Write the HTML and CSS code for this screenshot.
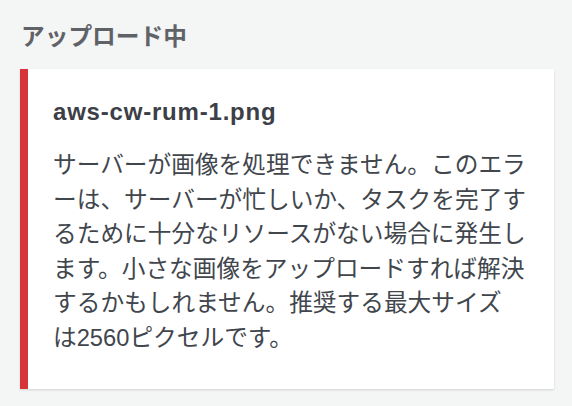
FILE: index.html
```html
<!DOCTYPE html>
<html lang="ja">
<head>
  <meta charset="UTF-8" />
  <meta name="viewport" content="width=device-width, initial-scale=1.0"/>
  <title>アップロード中</title>
  <link rel="stylesheet" href="styles.css">
</head>
<body>
  <div class="upload-panel">
    <h2>アップロード中</h2>
    <div class="error-card">
      <h3>aws-cw-rum-1.png</h3>
      <p>サーバーが画像を処理できません。このエラ<br>ーは、サーバーが忙しいか、タスクを完了す<br>るために十分なリソースがない場合に発生し<br>ます。小さな画像をアップロードすれば解決<br>するかもしれません。推奨する最大サイズ<br>は2560ピクセルです。</p>
    </div>
  </div>
</body>
</html>
```

FILE: styles.css
```css
body {
  font-family: "Liberation Sans", "Noto Sans CJK JP", sans-serif;
  background: #f4f5f5;
  margin: 0;
  color: #41464d;
}
.upload-panel {
  padding: 20px 18px 17px 20px;
}
.upload-panel h2 {
  margin: 0 0 15px 1px;
  font-size: 23.7px;
  line-height: 34px;
  font-weight: 700;
  color: #5f6368;
}
.error-card {
  background: white;
  border-left: 8px solid #d6343a;
  padding: 26px 20px 34px 25px;
  box-shadow: 0 1px 2px rgba(0, 0, 0, 0.15);
}
.error-card h3 {
  margin: 0 0 19px;
  font-size: 24px;
  line-height: 34px;
  font-weight: 700;
  letter-spacing: 0.8px;
  color: #3c4046;
}
.error-card p {
  margin: 0;
  font-size: 23.7px;
  line-height: 34.5px;
}
```
